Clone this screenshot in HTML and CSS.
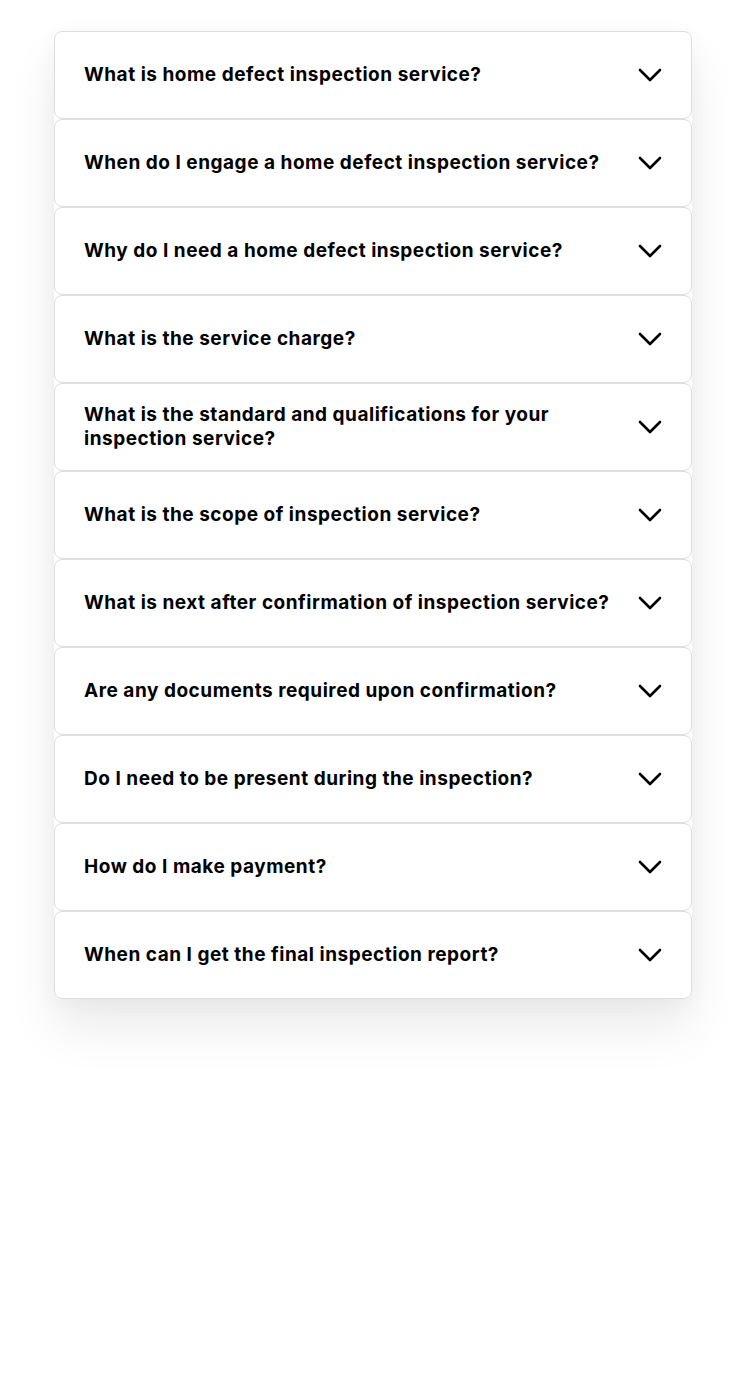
FILE: index.html
```html
<!DOCTYPE html>
<html lang="en">
<head>
<meta charset="utf-8">
<title>FAQ</title>
<link rel="stylesheet" href="styles.css">
</head>
<body>
<div class="faq">
  <div class="item"><span class="q">What is home defect inspection service?</span><svg class="chev" viewBox="0 0 24 14"><path d="M2 2 L12 12 L22 2"/></svg></div>
  <div class="item"><span class="q">When do I engage a home defect inspection service?</span><svg class="chev" viewBox="0 0 24 14"><path d="M2 2 L12 12 L22 2"/></svg></div>
  <div class="item"><span class="q">Why do I need a home defect inspection service?</span><svg class="chev" viewBox="0 0 24 14"><path d="M2 2 L12 12 L22 2"/></svg></div>
  <div class="item"><span class="q">What is the service charge?</span><svg class="chev" viewBox="0 0 24 14"><path d="M2 2 L12 12 L22 2"/></svg></div>
  <div class="item"><span class="q">What is the standard and qualifications for your inspection service?</span><svg class="chev" viewBox="0 0 24 14"><path d="M2 2 L12 12 L22 2"/></svg></div>
  <div class="item"><span class="q">What is the scope of inspection service?</span><svg class="chev" viewBox="0 0 24 14"><path d="M2 2 L12 12 L22 2"/></svg></div>
  <div class="item"><span class="q">What is next after confirmation of inspection service?</span><svg class="chev" viewBox="0 0 24 14"><path d="M2 2 L12 12 L22 2"/></svg></div>
  <div class="item"><span class="q">Are any documents required upon confirmation?</span><svg class="chev" viewBox="0 0 24 14"><path d="M2 2 L12 12 L22 2"/></svg></div>
  <div class="item"><span class="q">Do I need to be present during the inspection?</span><svg class="chev" viewBox="0 0 24 14"><path d="M2 2 L12 12 L22 2"/></svg></div>
  <div class="item"><span class="q">How do I make payment?</span><svg class="chev" viewBox="0 0 24 14"><path d="M2 2 L12 12 L22 2"/></svg></div>
  <div class="item"><span class="q">When can I get the final inspection report?</span><svg class="chev" viewBox="0 0 24 14"><path d="M2 2 L12 12 L22 2"/></svg></div>
</div>
</body>
</html>
```
FILE: styles.css
```css
* { box-sizing: border-box; }
html, body { margin: 0; padding: 0; background: #fff; }
body { font-family: Inter, "Noto Sans", sans-serif; color: #000; min-height: 1377px; }
.faq {
  width: 638px;
  margin: 31px 0 0 54px;
  display: flex;
  flex-direction: column;
  border-radius: 8px;
  box-shadow: 0 30px 50px rgba(0,0,0,0.08), 0 4px 24px rgba(0,0,0,0.04);
}
.item {
  height: 88px;
  display: flex;
  align-items: center;
  justify-content: space-between;
  gap: 24px;
  padding: 0 29px 0 29px;
  background: #fff;
  border: 1px solid #dedede;
  border-radius: 8px;
}
.q {
  font-size: 19px;
  font-weight: 700;
  line-height: 24px;
  letter-spacing: 0.52px;
}
.chev {
  flex: none;
  width: 24px;
  height: 14px;
}
.chev path {
  fill: none;
  stroke: #000;
  stroke-width: 2.6;
  stroke-linecap: round;
  stroke-linejoin: round;
}
```
